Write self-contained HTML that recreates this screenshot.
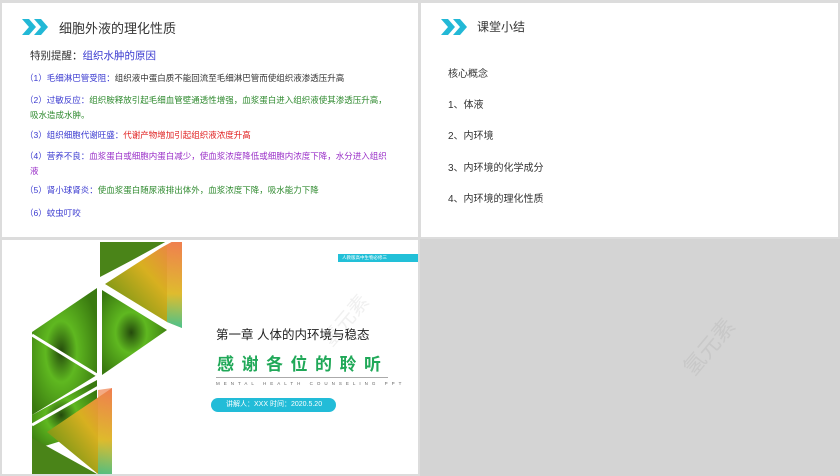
<!DOCTYPE html>
<html><head><meta charset="utf-8"><style>
*{margin:0;padding:0;box-sizing:border-box}
body{width:840px;height:476px;background:#dcdcdc;position:relative;overflow:hidden;font-family:"Liberation Sans","Noto Sans CJK SC",sans-serif}
.p{position:absolute;background:#fff}
.t{position:absolute;white-space:nowrap}
.s{font-size:8.5px;line-height:10px}
.b{color:#3a3ad0}.g{color:#2f8a2f}.r{color:#e02020}.v{color:#9a30c8}.k{color:#333}
</style></head><body>
<div class="p" style="left:2px;top:3px;width:416px;height:234px">
 <svg style="position:absolute;left:20px;top:14px" width="30" height="20"><polygon points="0,2 7,2 14,10 7,18 0,18 7,10" fill="#22b8d6"/><polygon points="12,2 19,2 26,10 19,18 12,18 19,10" fill="#22b8d6"/></svg>
 <div class="t k" style="left:57px;top:15px;font-size:13px">细胞外液的理化性质</div>
 <div class="t" style="left:28px;top:45px;font-size:10.5px"><span class="k">特别提醒：</span><span class="b">组织水肿的原因</span></div>
 <div class="t s" style="left:23px;top:70px"><span class="b">（1）毛细淋巴管受阻：</span><span class="k">组织液中蛋白质不能回流至毛细淋巴管而使组织液渗透压升高</span></div>
 <div class="t s" style="left:23px;top:92px"><span class="b">（2）过敏反应：</span><span class="g">组织胺释放引起毛细血管壁通透性增强，血浆蛋白进入组织液使其渗透压升高，</span></div>
 <div class="t s g" style="left:28px;top:107px">吸水造成水肿。</div>
 <div class="t s" style="left:23px;top:127px"><span class="b">（3）组织细胞代谢旺盛：</span><span class="r">代谢产物增加引起组织液浓度升高</span></div>
 <div class="t s" style="left:23px;top:148px"><span class="b">（4）营养不良：</span><span class="v">血浆蛋白或细胞内蛋白减少，使血浆浓度降低或细胞内浓度下降，水分进入组织</span></div>
 <div class="t s v" style="left:28px;top:163px">液</div>
 <div class="t s" style="left:23px;top:182px"><span class="b">（5）肾小球肾炎：</span><span class="g">使血浆蛋白随尿液排出体外，血浆浓度下降，吸水能力下降</span></div>
 <div class="t s b" style="left:23px;top:205px">（6）蚊虫叮咬</div>
</div>
<div class="p" style="left:421px;top:3px;width:417px;height:234px">
 <svg style="position:absolute;left:20px;top:14px" width="30" height="20"><polygon points="0,2 7,2 14,10 7,18 0,18 7,10" fill="#22b8d6"/><polygon points="12,2 19,2 26,10 19,18 12,18 19,10" fill="#22b8d6"/></svg>
 <div class="t k" style="left:56px;top:15px;font-size:12px">课堂小结</div>
 <div class="t k" style="left:27px;top:62px;font-size:10px">核心概念</div>
 <div class="t k" style="left:27px;top:93px;font-size:10px">1、体液</div>
 <div class="t k" style="left:27px;top:124px;font-size:10px">2、内环境</div>
 <div class="t k" style="left:27px;top:156px;font-size:10px">3、内环境的化学成分</div>
 <div class="t k" style="left:27px;top:187px;font-size:10px">4、内环境的理化性质</div>
</div>
<div class="p" style="left:2px;top:240px;width:416px;height:234px;overflow:hidden">
 <div class="t" style="left:312px;top:65px;font-size:20px;color:#f0f0f0;transform:rotate(-50deg)">氢元素</div>
 <svg style="position:absolute;left:0;top:0" width="200" height="234">
  <defs>
   <linearGradient id="gr" x1="0" y1="1" x2="1" y2="0"><stop offset="0" stop-color="#4a8a10"/><stop offset="0.6" stop-color="#d8b020"/><stop offset="1" stop-color="#f07850"/></linearGradient>
   <linearGradient id="gr2" x1="0" y1="0" x2="0" y2="1"><stop offset="0" stop-color="#f08050"/><stop offset="0.6" stop-color="#e0c030"/><stop offset="1" stop-color="#30c8a8"/></linearGradient>
   <radialGradient id="vir" cx="0.45" cy="0.5" r="0.6"><stop offset="0" stop-color="#244a0c"/><stop offset="0.4" stop-color="#5fb820"/><stop offset="1" stop-color="#3a7a10"/></radialGradient>
  </defs>
  <polygon points="98,2 165,2 98,37" fill="#4a8418"/>
  <polygon points="103,44 168,2 180,2 180,88 165,82" fill="url(#gr)"/>
  <polygon points="165,2 180,2 180,88 165,82" fill="url(#gr2)" opacity=".8"/>
  <polygon points="30,92 95,48 95,135 30,175" fill="url(#vir)"/>
  <polygon points="100,50 165,90 100,135" fill="url(#vir)"/>
  <polygon points="30,175 95,140 95,190 30,210" fill="url(#vir)"/>
  <polygon points="45,192 110,148 110,234 96,234" fill="url(#gr)"/>
  <polygon points="96,150 110,148 110,234 96,234" fill="url(#gr2)" opacity=".7"/>
  <polygon points="30,198 95,234 30,234" fill="#4a8418"/>
  <g stroke="#fff" stroke-width="3"><line x1="30" y1="95" x2="95" y2="135"/><line x1="97" y1="40" x2="170" y2="0"/><line x1="30" y1="185" x2="100" y2="145"/></g>
 </svg>
 <div class="t" style="left:336px;top:14px;width:80px;height:8px;background:#22c0d8;color:#fff;font-size:4.5px;line-height:8px;padding-left:4px">人教版高中生物必修三</div>
 <div class="t" style="left:214px;top:84px;font-size:12.5px;color:#222">第一章 人体的内环境与稳态</div>
 <div class="t" style="left:215px;top:110px;font-size:17px;color:#20a858;font-weight:bold;letter-spacing:7.5px">感谢各位的聆听</div>
 <div style="position:absolute;left:214px;top:137px;width:172px;height:1px;background:#aaa"></div>
 <div class="t" style="left:214px;top:141px;font-size:4.5px;color:#666;letter-spacing:4px">MENTAL HEALTH COUNSELING PPT</div>
 <div class="t" style="left:209px;top:158px;width:125px;height:14px;border-radius:7px;background:#22bcd8;color:#fff;font-size:7px;line-height:14px;padding-left:15px">讲解人：XXX 时间：2020.5.20</div>
</div>
<div style="position:absolute;left:420px;top:239px;width:420px;height:237px;background:#d4d4d4"></div>
<div class="t" style="left:675px;top:330px;font-size:22px;color:#c8c8c8;transform:rotate(-50deg)">氢元素</div>
</body></html>
